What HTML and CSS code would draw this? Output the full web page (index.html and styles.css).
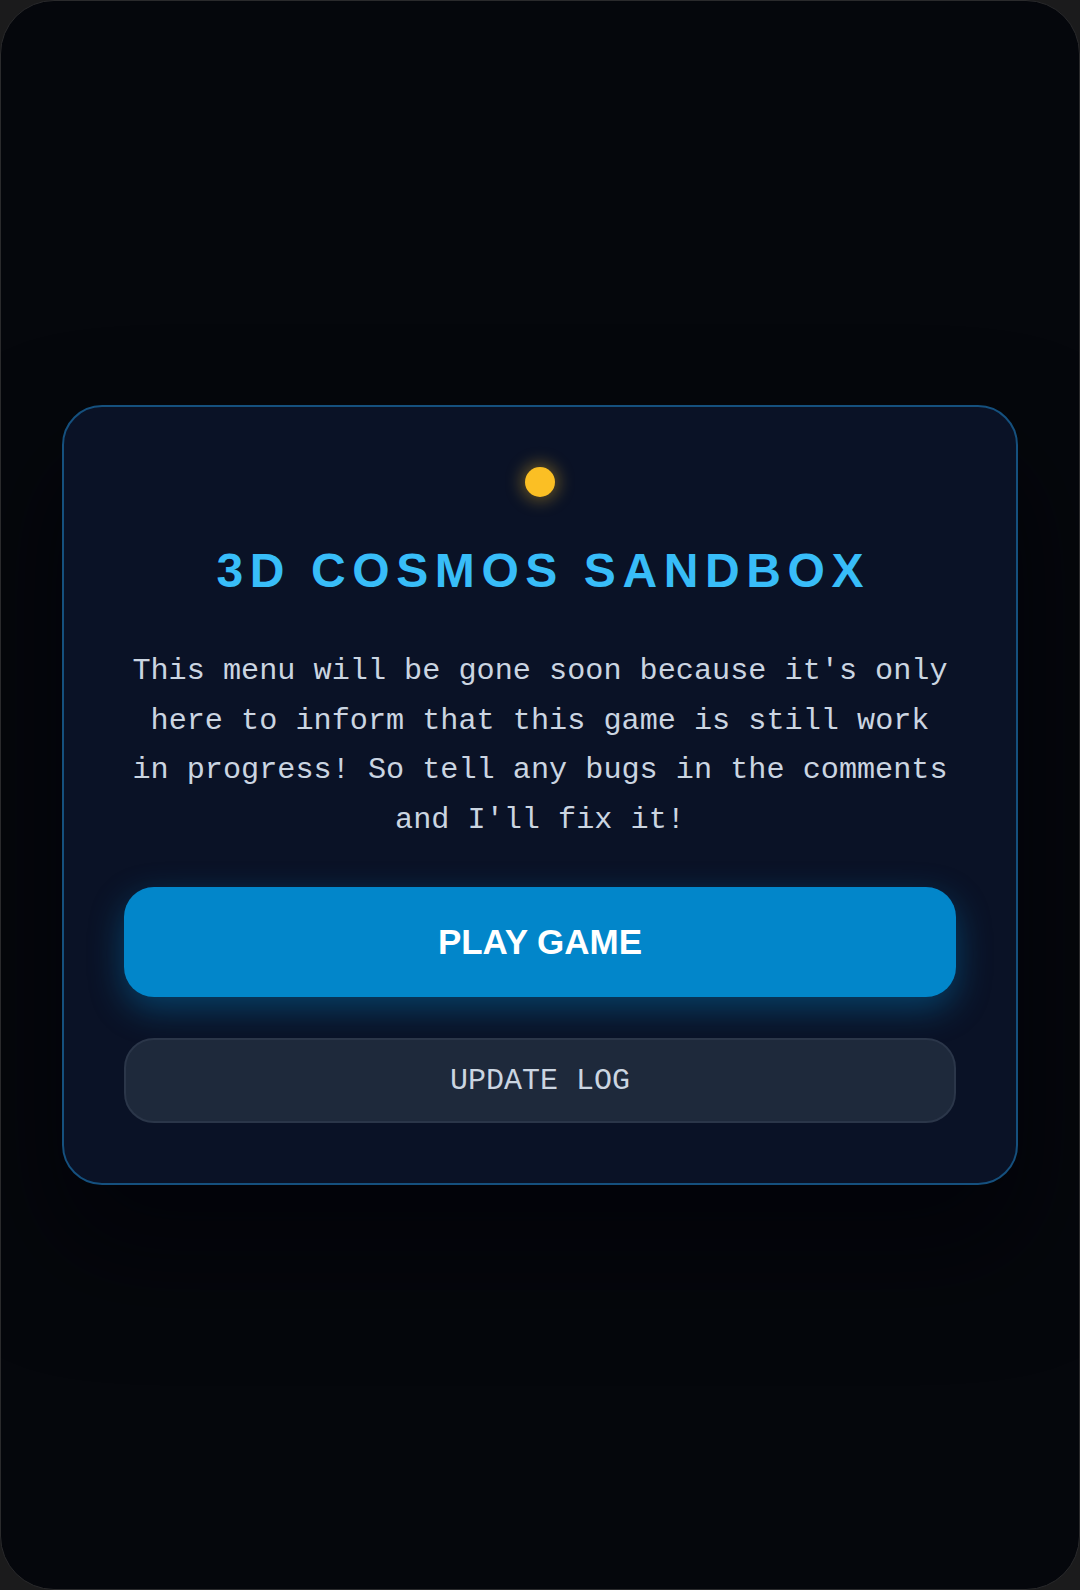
FILE: index.html
```html
<!DOCTYPE html>
<html lang="en">
<head>
<meta charset="utf-8">
<title>3D Cosmos Sandbox</title>
<link rel="stylesheet" href="styles.css">
</head>
<body>
<div class="screen">
  <div class="card">
    <div class="sun"></div>
    <h1 class="title">3D COSMOS SANDBOX</h1>
    <p class="info">This menu will be gone soon because it's only here to inform that this game is still work in progress! So tell any bugs in the comments and I'll fix it!</p>
    <button class="btn btn-play">PLAY GAME</button>
    <button class="btn btn-log">UPDATE LOG</button>
  </div>
</div>
</body>
</html>
```
FILE: styles.css
```css
html, body {
  margin: 0;
  padding: 0;
  background: #1b1b1c;
}
.screen {
  box-sizing: border-box;
  width: 1080px;
  height: 1590px;
  border-radius: 54px;
  background: #05070c;
  border: 1px solid #2a2a2c;
  display: flex;
  align-items: center;
  justify-content: center;
  overflow: hidden;
}
.card {
  box-sizing: border-box;
  width: 956px;
  height: 780px;
  border: 2px solid #15507e;
  border-radius: 40px;
  background: #0a1226;
  padding: 60px 60px;
  display: flex;
  flex-direction: column;
  align-items: center;
  box-shadow: 0 60px 110px 10px rgba(0, 0, 8, 0.55);
}
.sun {
  width: 30px;
  height: 30px;
  border-radius: 50%;
  background: #fbbf24;
  box-shadow: 0 0 16px 4px rgba(251, 191, 36, 0.35);
  flex: none;
}
.title {
  margin: 46px -6.6px 0 0;
  font-family: "Liberation Sans", Arial, sans-serif;
  font-weight: 700;
  font-size: 48px;
  line-height: 55px;
  letter-spacing: 6.6px;
  color: #38bdf8;
  text-align: center;
}
.info {
  box-sizing: border-box;
  margin: 49px 0 0;
  padding: 0 5px;
  font-family: "Liberation Mono", "Courier New", monospace;
  font-size: 30.2px;
  line-height: 49.5px;
  color: #cbd5e1;
  text-align: center;
  width: 100%;
}
.btn {
  box-sizing: border-box;
  width: 100%;
  flex: none;
  cursor: pointer;
}
.btn-play {
  margin-top: 42px;
  height: 110px;
  border: none;
  border-radius: 30px;
  background: #0286ca;
  color: #ffffff;
  font-family: "Liberation Sans", Arial, sans-serif;
  font-weight: 700;
  font-size: 35px;
  box-shadow: 0 12px 34px rgba(2, 132, 199, 0.4);
}
.btn-log {
  margin-top: 41px;
  height: 85px;
  border: 2px solid #2b3649;
  border-radius: 30px;
  background: #1e293b;
  color: #cbd5e1;
  font-family: "Liberation Mono", "Courier New", monospace;
  font-size: 30px;
}
```
